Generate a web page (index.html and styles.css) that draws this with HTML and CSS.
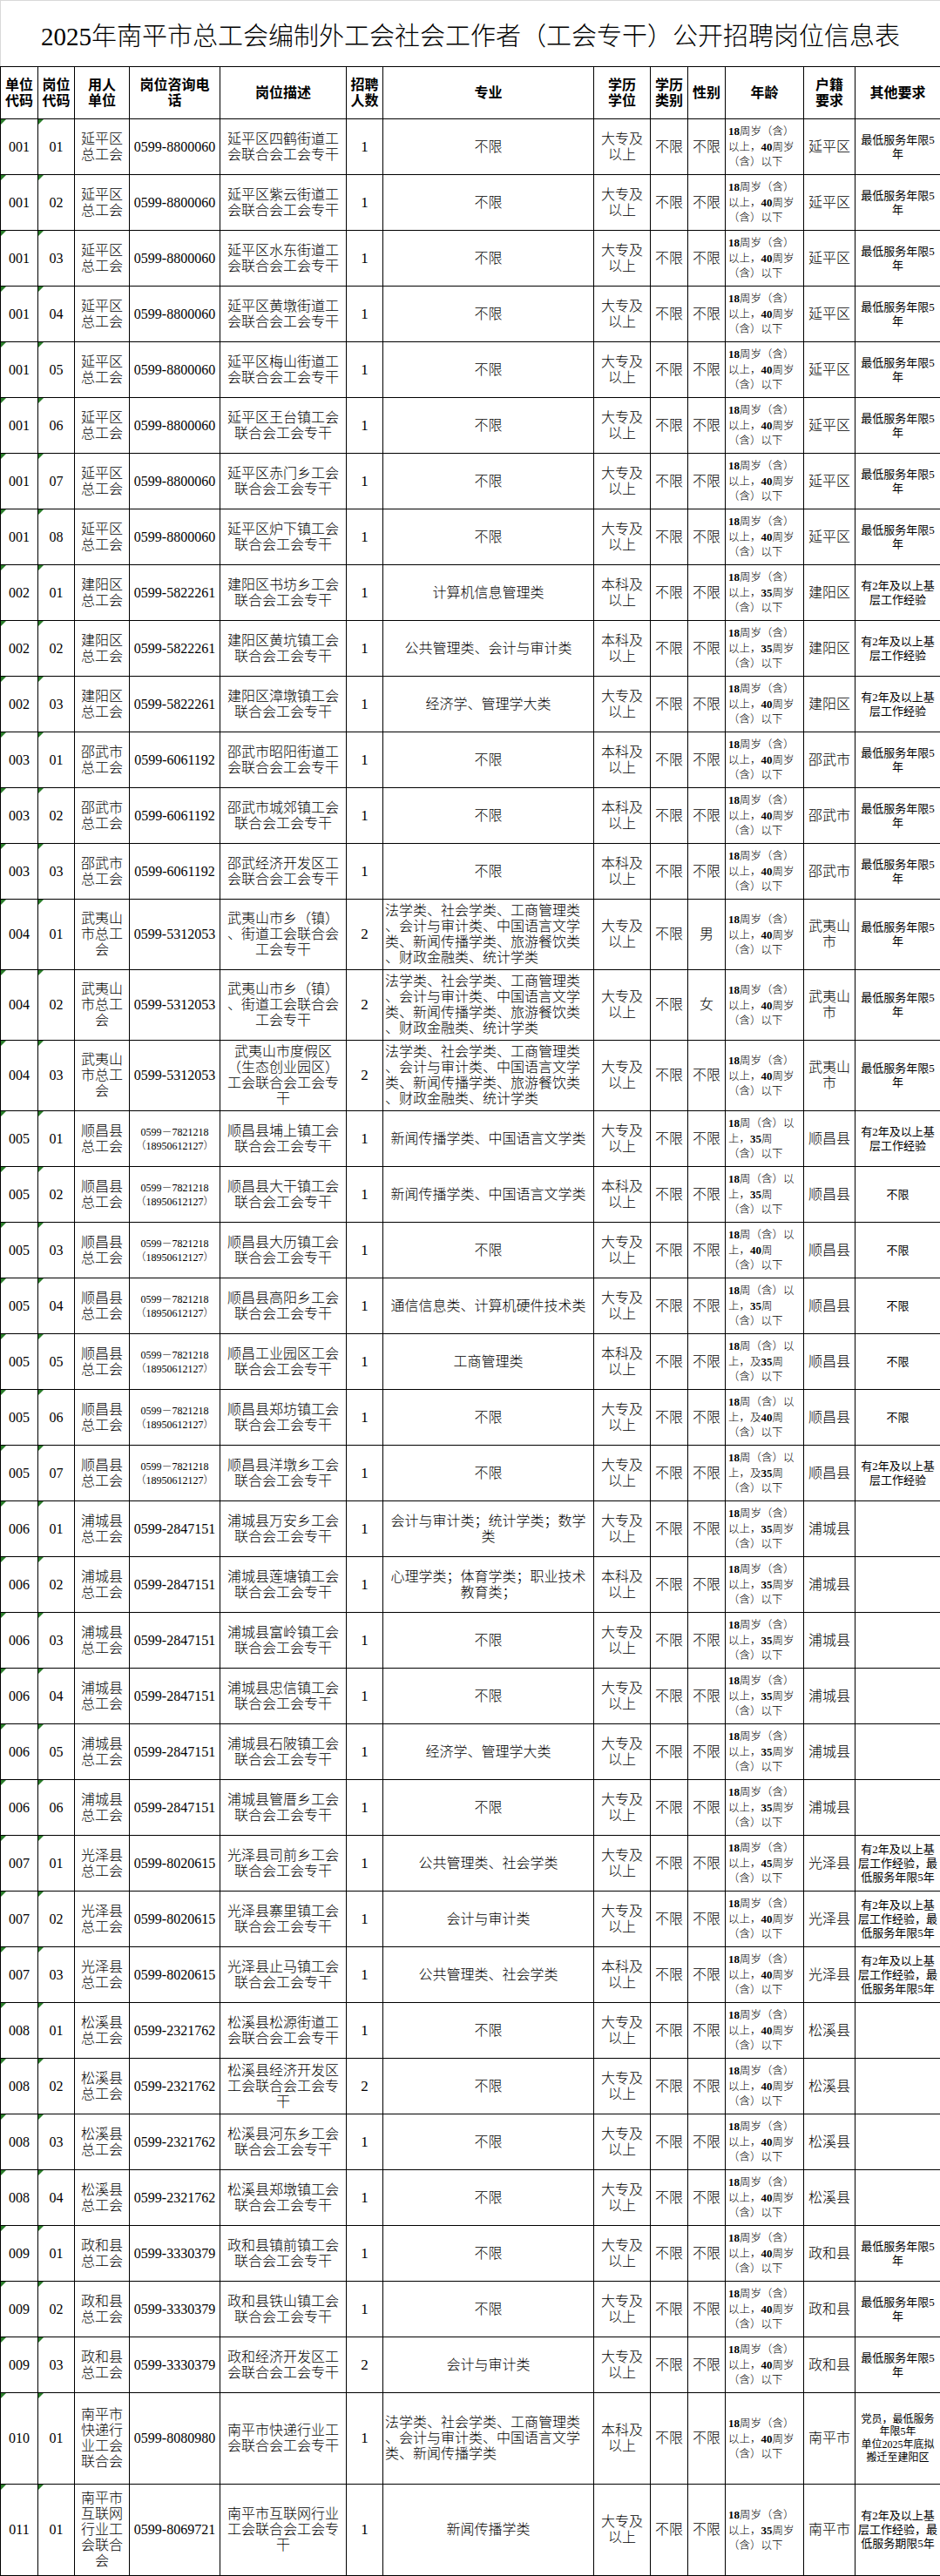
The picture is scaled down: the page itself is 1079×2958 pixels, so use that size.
FILE: index.html
```html
<!DOCTYPE html>
<html lang="zh-CN">
<head>
<meta charset="utf-8">
<title>2025年南平市总工会编制外工会社会工作者（工会专干）公开招聘岗位信息表</title>
<link rel="stylesheet" href="styles.css">
</head>
<body>
<table class="sheet">
<colgroup>
<col class="w43"><col class="w42"><col class="w63"><col class="w104"><col class="w145"><col class="w42"><col class="w242"><col class="w65"><col class="w43"><col class="w43"><col class="w90"><col class="w59"><col class="w98">
</colgroup>
<tr class="title"><td colspan="13">2025年南平市总工会编制外工会社会工作者（工会专干）公开招聘岗位信息表</td></tr>
<tr class="head"><th>单位<br>代码</th><th>岗位<br>代码</th><th>用人<br>单位</th><th>岗位咨询电<br>话</th><th>岗位描述</th><th>招聘<br>人数</th><th>专业</th><th>学历<br>学位</th><th>学历<br>类别</th><th>性别</th><th>年龄</th><th>户籍<br>要求</th><th>其他要求</th></tr>

<tr><td class="code">001</td><td class="code">01</td><td>延平区<br>总工会</td><td class="ph">0599-8800060</td><td>延平区四鹤街道工<br>会联合会工会专干</td><td class="num">1</td><td>不限</td><td>大专及<br>以上</td><td>不限</td><td>不限</td><td class="age"><b>18</b>周岁（含）<br>以上，<b>40</b>周岁<br>（含）以下</td><td>延平区</td><td class="oth">最低服务年限5<br>年</td></tr>
<tr><td class="code">001</td><td class="code">02</td><td>延平区<br>总工会</td><td class="ph">0599-8800060</td><td>延平区紫云街道工<br>会联合会工会专干</td><td class="num">1</td><td>不限</td><td>大专及<br>以上</td><td>不限</td><td>不限</td><td class="age"><b>18</b>周岁（含）<br>以上，<b>40</b>周岁<br>（含）以下</td><td>延平区</td><td class="oth">最低服务年限5<br>年</td></tr>
<tr><td class="code">001</td><td class="code">03</td><td>延平区<br>总工会</td><td class="ph">0599-8800060</td><td>延平区水东街道工<br>会联合会工会专干</td><td class="num">1</td><td>不限</td><td>大专及<br>以上</td><td>不限</td><td>不限</td><td class="age"><b>18</b>周岁（含）<br>以上，<b>40</b>周岁<br>（含）以下</td><td>延平区</td><td class="oth">最低服务年限5<br>年</td></tr>
<tr><td class="code">001</td><td class="code">04</td><td>延平区<br>总工会</td><td class="ph">0599-8800060</td><td>延平区黄墩街道工<br>会联合会工会专干</td><td class="num">1</td><td>不限</td><td>大专及<br>以上</td><td>不限</td><td>不限</td><td class="age"><b>18</b>周岁（含）<br>以上，<b>40</b>周岁<br>（含）以下</td><td>延平区</td><td class="oth">最低服务年限5<br>年</td></tr>
<tr><td class="code">001</td><td class="code">05</td><td>延平区<br>总工会</td><td class="ph">0599-8800060</td><td>延平区梅山街道工<br>会联合会工会专干</td><td class="num">1</td><td>不限</td><td>大专及<br>以上</td><td>不限</td><td>不限</td><td class="age"><b>18</b>周岁（含）<br>以上，<b>40</b>周岁<br>（含）以下</td><td>延平区</td><td class="oth">最低服务年限5<br>年</td></tr>
<tr><td class="code">001</td><td class="code">06</td><td>延平区<br>总工会</td><td class="ph">0599-8800060</td><td>延平区王台镇工会<br>联合会工会专干</td><td class="num">1</td><td>不限</td><td>大专及<br>以上</td><td>不限</td><td>不限</td><td class="age"><b>18</b>周岁（含）<br>以上，<b>40</b>周岁<br>（含）以下</td><td>延平区</td><td class="oth">最低服务年限5<br>年</td></tr>
<tr><td class="code">001</td><td class="code">07</td><td>延平区<br>总工会</td><td class="ph">0599-8800060</td><td>延平区赤门乡工会<br>联合会工会专干</td><td class="num">1</td><td>不限</td><td>大专及<br>以上</td><td>不限</td><td>不限</td><td class="age"><b>18</b>周岁（含）<br>以上，<b>40</b>周岁<br>（含）以下</td><td>延平区</td><td class="oth">最低服务年限5<br>年</td></tr>
<tr><td class="code">001</td><td class="code">08</td><td>延平区<br>总工会</td><td class="ph">0599-8800060</td><td>延平区炉下镇工会<br>联合会工会专干</td><td class="num">1</td><td>不限</td><td>大专及<br>以上</td><td>不限</td><td>不限</td><td class="age"><b>18</b>周岁（含）<br>以上，<b>40</b>周岁<br>（含）以下</td><td>延平区</td><td class="oth">最低服务年限5<br>年</td></tr>

<tr><td class="code">002</td><td class="code">01</td><td>建阳区<br>总工会</td><td class="ph">0599-5822261</td><td>建阳区书坊乡工会<br>联合会工会专干</td><td class="num">1</td><td>计算机信息管理类</td><td>本科及<br>以上</td><td>不限</td><td>不限</td><td class="age"><b>18</b>周岁（含）<br>以上，<b>35</b>周岁<br>（含）以下</td><td>建阳区</td><td class="oth">有2年及以上基<br>层工作经验</td></tr>
<tr><td class="code">002</td><td class="code">02</td><td>建阳区<br>总工会</td><td class="ph">0599-5822261</td><td>建阳区黄坑镇工会<br>联合会工会专干</td><td class="num">1</td><td>公共管理类、会计与审计类</td><td>本科及<br>以上</td><td>不限</td><td>不限</td><td class="age"><b>18</b>周岁（含）<br>以上，<b>35</b>周岁<br>（含）以下</td><td>建阳区</td><td class="oth">有2年及以上基<br>层工作经验</td></tr>
<tr><td class="code">002</td><td class="code">03</td><td>建阳区<br>总工会</td><td class="ph">0599-5822261</td><td>建阳区漳墩镇工会<br>联合会工会专干</td><td class="num">1</td><td>经济学、管理学大类</td><td>大专及<br>以上</td><td>不限</td><td>不限</td><td class="age"><b>18</b>周岁（含）<br>以上，<b>40</b>周岁<br>（含）以下</td><td>建阳区</td><td class="oth">有2年及以上基<br>层工作经验</td></tr>

<tr><td class="code">003</td><td class="code">01</td><td>邵武市<br>总工会</td><td class="ph">0599-6061192</td><td>邵武市昭阳街道工<br>会联合会工会专干</td><td class="num">1</td><td>不限</td><td>本科及<br>以上</td><td>不限</td><td>不限</td><td class="age"><b>18</b>周岁（含）<br>以上，<b>40</b>周岁<br>（含）以下</td><td>邵武市</td><td class="oth">最低服务年限5<br>年</td></tr>
<tr><td class="code">003</td><td class="code">02</td><td>邵武市<br>总工会</td><td class="ph">0599-6061192</td><td>邵武市城郊镇工会<br>联合会工会专干</td><td class="num">1</td><td>不限</td><td>本科及<br>以上</td><td>不限</td><td>不限</td><td class="age"><b>18</b>周岁（含）<br>以上，<b>40</b>周岁<br>（含）以下</td><td>邵武市</td><td class="oth">最低服务年限5<br>年</td></tr>
<tr><td class="code">003</td><td class="code">03</td><td>邵武市<br>总工会</td><td class="ph">0599-6061192</td><td>邵武经济开发区工<br>会联合会工会专干</td><td class="num">1</td><td>不限</td><td>本科及<br>以上</td><td>不限</td><td>不限</td><td class="age"><b>18</b>周岁（含）<br>以上，<b>40</b>周岁<br>（含）以下</td><td>邵武市</td><td class="oth">最低服务年限5<br>年</td></tr>

<tr class="r81"><td class="code">004</td><td class="code">01</td><td>武夷山<br>市总工<br>会</td><td class="ph">0599-5312053</td><td>武夷山市乡（镇）<br>、街道工会联合会<br>工会专干</td><td class="num">2</td><td class="lft">法学类、社会学类、工商管理类<br>、会计与审计类、中国语言文学<br>类、新闻传播学类、旅游餐饮类<br>、财政金融类、统计学类</td><td>大专及<br>以上</td><td>不限</td><td>男</td><td class="age"><b>18</b>周岁（含）<br>以上，<b>40</b>周岁<br>（含）以下</td><td>武夷山<br>市</td><td class="oth">最低服务年限5<br>年</td></tr>
<tr class="r81"><td class="code">004</td><td class="code">02</td><td>武夷山<br>市总工<br>会</td><td class="ph">0599-5312053</td><td>武夷山市乡（镇）<br>、街道工会联合会<br>工会专干</td><td class="num">2</td><td class="lft">法学类、社会学类、工商管理类<br>、会计与审计类、中国语言文学<br>类、新闻传播学类、旅游餐饮类<br>、财政金融类、统计学类</td><td>大专及<br>以上</td><td>不限</td><td>女</td><td class="age"><b>18</b>周岁（含）<br>以上，<b>40</b>周岁<br>（含）以下</td><td>武夷山<br>市</td><td class="oth">最低服务年限5<br>年</td></tr>
<tr class="r81"><td class="code">004</td><td class="code">03</td><td>武夷山<br>市总工<br>会</td><td class="ph">0599-5312053</td><td>武夷山市度假区<br>（生态创业园区）<br>工会联合会工会专<br>干</td><td class="num">2</td><td class="lft">法学类、社会学类、工商管理类<br>、会计与审计类、中国语言文学<br>类、新闻传播学类、旅游餐饮类<br>、财政金融类、统计学类</td><td>大专及<br>以上</td><td>不限</td><td>不限</td><td class="age"><b>18</b>周岁（含）<br>以上，<b>40</b>周岁<br>（含）以下</td><td>武夷山<br>市</td><td class="oth">最低服务年限5<br>年</td></tr>

<tr><td class="code">005</td><td class="code">01</td><td>顺昌县<br>总工会</td><td class="ph2">0599－7821218<br>（18950612127）</td><td>顺昌县埔上镇工会<br>联合会工会专干</td><td class="num">1</td><td>新闻传播学类、中国语言文学类</td><td>大专及<br>以上</td><td>不限</td><td>不限</td><td class="age"><b>18</b>周（含）以<br>上，<b>35</b>周<br>（含）以下</td><td>顺昌县</td><td class="oth">有2年及以上基<br>层工作经验</td></tr>
<tr><td class="code">005</td><td class="code">02</td><td>顺昌县<br>总工会</td><td class="ph2">0599－7821218<br>（18950612127）</td><td>顺昌县大干镇工会<br>联合会工会专干</td><td class="num">1</td><td>新闻传播学类、中国语言文学类</td><td>本科及<br>以上</td><td>不限</td><td>不限</td><td class="age"><b>18</b>周（含）以<br>上，<b>35</b>周<br>（含）以下</td><td>顺昌县</td><td class="oth">不限</td></tr>
<tr><td class="code">005</td><td class="code">03</td><td>顺昌县<br>总工会</td><td class="ph2">0599－7821218<br>（18950612127）</td><td>顺昌县大历镇工会<br>联合会工会专干</td><td class="num">1</td><td>不限</td><td>大专及<br>以上</td><td>不限</td><td>不限</td><td class="age"><b>18</b>周（含）以<br>上，<b>40</b>周<br>（含）以下</td><td>顺昌县</td><td class="oth">不限</td></tr>
<tr><td class="code">005</td><td class="code">04</td><td>顺昌县<br>总工会</td><td class="ph2">0599－7821218<br>（18950612127）</td><td>顺昌县高阳乡工会<br>联合会工会专干</td><td class="num">1</td><td>通信信息类、计算机硬件技术类</td><td>大专及<br>以上</td><td>不限</td><td>不限</td><td class="age"><b>18</b>周（含）以<br>上，<b>35</b>周<br>（含）以下</td><td>顺昌县</td><td class="oth">不限</td></tr>
<tr><td class="code">005</td><td class="code">05</td><td>顺昌县<br>总工会</td><td class="ph2">0599－7821218<br>（18950612127）</td><td>顺昌工业园区工会<br>联合会工会专干</td><td class="num">1</td><td>工商管理类</td><td>本科及<br>以上</td><td>不限</td><td>不限</td><td class="age"><b>18</b>周（含）以<br>上，及<b>35</b>周<br>（含）以下</td><td>顺昌县</td><td class="oth">不限</td></tr>
<tr><td class="code">005</td><td class="code">06</td><td>顺昌县<br>总工会</td><td class="ph2">0599－7821218<br>（18950612127）</td><td>顺昌县郑坊镇工会<br>联合会工会专干</td><td class="num">1</td><td>不限</td><td>大专及<br>以上</td><td>不限</td><td>不限</td><td class="age"><b>18</b>周（含）以<br>上，及<b>40</b>周<br>（含）以下</td><td>顺昌县</td><td class="oth">不限</td></tr>
<tr><td class="code">005</td><td class="code">07</td><td>顺昌县<br>总工会</td><td class="ph2">0599－7821218<br>（18950612127）</td><td>顺昌县洋墩乡工会<br>联合会工会专干</td><td class="num">1</td><td>不限</td><td>大专及<br>以上</td><td>不限</td><td>不限</td><td class="age"><b>18</b>周（含）以<br>上，及<b>35</b>周<br>（含）以下</td><td>顺昌县</td><td class="oth">有2年及以上基<br>层工作经验</td></tr>

<tr><td class="code">006</td><td class="code">01</td><td>浦城县<br>总工会</td><td class="ph">0599-2847151</td><td>浦城县万安乡工会<br>联合会工会专干</td><td class="num">1</td><td>会计与审计类；统计学类；数学<br>类</td><td>大专及<br>以上</td><td>不限</td><td>不限</td><td class="age"><b>18</b>周岁（含）<br>以上，<b>35</b>周岁<br>（含）以下</td><td>浦城县</td><td class="oth"></td></tr>
<tr><td class="code">006</td><td class="code">02</td><td>浦城县<br>总工会</td><td class="ph">0599-2847151</td><td>浦城县莲塘镇工会<br>联合会工会专干</td><td class="num">1</td><td>心理学类；体育学类；职业技术<br>教育类；</td><td>本科及<br>以上</td><td>不限</td><td>不限</td><td class="age"><b>18</b>周岁（含）<br>以上，<b>35</b>周岁<br>（含）以下</td><td>浦城县</td><td class="oth"></td></tr>
<tr><td class="code">006</td><td class="code">03</td><td>浦城县<br>总工会</td><td class="ph">0599-2847151</td><td>浦城县富岭镇工会<br>联合会工会专干</td><td class="num">1</td><td>不限</td><td>大专及<br>以上</td><td>不限</td><td>不限</td><td class="age"><b>18</b>周岁（含）<br>以上，<b>35</b>周岁<br>（含）以下</td><td>浦城县</td><td class="oth"></td></tr>
<tr><td class="code">006</td><td class="code">04</td><td>浦城县<br>总工会</td><td class="ph">0599-2847151</td><td>浦城县忠信镇工会<br>联合会工会专干</td><td class="num">1</td><td>不限</td><td>大专及<br>以上</td><td>不限</td><td>不限</td><td class="age"><b>18</b>周岁（含）<br>以上，<b>35</b>周岁<br>（含）以下</td><td>浦城县</td><td class="oth"></td></tr>
<tr><td class="code">006</td><td class="code">05</td><td>浦城县<br>总工会</td><td class="ph">0599-2847151</td><td>浦城县石陂镇工会<br>联合会工会专干</td><td class="num">1</td><td>经济学、管理学大类</td><td>大专及<br>以上</td><td>不限</td><td>不限</td><td class="age"><b>18</b>周岁（含）<br>以上，<b>35</b>周岁<br>（含）以下</td><td>浦城县</td><td class="oth"></td></tr>
<tr><td class="code">006</td><td class="code">06</td><td>浦城县<br>总工会</td><td class="ph">0599-2847151</td><td>浦城县管厝乡工会<br>联合会工会专干</td><td class="num">1</td><td>不限</td><td>大专及<br>以上</td><td>不限</td><td>不限</td><td class="age"><b>18</b>周岁（含）<br>以上，<b>35</b>周岁<br>（含）以下</td><td>浦城县</td><td class="oth"></td></tr>

<tr><td class="code">007</td><td class="code">01</td><td>光泽县<br>总工会</td><td class="ph">0599-8020615</td><td>光泽县司前乡工会<br>联合会工会专干</td><td class="num">1</td><td>公共管理类、社会学类</td><td>大专及<br>以上</td><td>不限</td><td>不限</td><td class="age"><b>18</b>周岁（含）<br>以上，<b>45</b>周岁<br>（含）以下</td><td>光泽县</td><td class="oth">有2年及以上基<br>层工作经验，最<br>低服务年限5年</td></tr>
<tr><td class="code">007</td><td class="code">02</td><td>光泽县<br>总工会</td><td class="ph">0599-8020615</td><td>光泽县寨里镇工会<br>联合会工会专干</td><td class="num">1</td><td>会计与审计类</td><td>大专及<br>以上</td><td>不限</td><td>不限</td><td class="age"><b>18</b>周岁（含）<br>以上，<b>40</b>周岁<br>（含）以下</td><td>光泽县</td><td class="oth">有2年及以上基<br>层工作经验，最<br>低服务年限5年</td></tr>
<tr><td class="code">007</td><td class="code">03</td><td>光泽县<br>总工会</td><td class="ph">0599-8020615</td><td>光泽县止马镇工会<br>联合会工会专干</td><td class="num">1</td><td>公共管理类、社会学类</td><td>本科及<br>以上</td><td>不限</td><td>不限</td><td class="age"><b>18</b>周岁（含）<br>以上，<b>40</b>周岁<br>（含）以下</td><td>光泽县</td><td class="oth">有2年及以上基<br>层工作经验，最<br>低服务年限5年</td></tr>

<tr><td class="code">008</td><td class="code">01</td><td>松溪县<br>总工会</td><td class="ph">0599-2321762</td><td>松溪县松源街道工<br>会联合会工会专干</td><td class="num">1</td><td>不限</td><td>大专及<br>以上</td><td>不限</td><td>不限</td><td class="age"><b>18</b>周岁（含）<br>以上，<b>40</b>周岁<br>（含）以下</td><td>松溪县</td><td class="oth"></td></tr>
<tr><td class="code">008</td><td class="code">02</td><td>松溪县<br>总工会</td><td class="ph">0599-2321762</td><td>松溪县经济开发区<br>工会联合会工会专<br>干</td><td class="num">2</td><td>不限</td><td>大专及<br>以上</td><td>不限</td><td>不限</td><td class="age"><b>18</b>周岁（含）<br>以上，<b>40</b>周岁<br>（含）以下</td><td>松溪县</td><td class="oth"></td></tr>
<tr><td class="code">008</td><td class="code">03</td><td>松溪县<br>总工会</td><td class="ph">0599-2321762</td><td>松溪县河东乡工会<br>联合会工会专干</td><td class="num">1</td><td>不限</td><td>大专及<br>以上</td><td>不限</td><td>不限</td><td class="age"><b>18</b>周岁（含）<br>以上，<b>40</b>周岁<br>（含）以下</td><td>松溪县</td><td class="oth"></td></tr>
<tr><td class="code">008</td><td class="code">04</td><td>松溪县<br>总工会</td><td class="ph">0599-2321762</td><td>松溪县郑墩镇工会<br>联合会工会专干</td><td class="num">1</td><td>不限</td><td>大专及<br>以上</td><td>不限</td><td>不限</td><td class="age"><b>18</b>周岁（含）<br>以上，<b>40</b>周岁<br>（含）以下</td><td>松溪县</td><td class="oth"></td></tr>

<tr><td class="code">009</td><td class="code">01</td><td>政和县<br>总工会</td><td class="ph">0599-3330379</td><td>政和县镇前镇工会<br>联合会工会专干</td><td class="num">1</td><td>不限</td><td>大专及<br>以上</td><td>不限</td><td>不限</td><td class="age"><b>18</b>周岁（含）<br>以上，<b>40</b>周岁<br>（含）以下</td><td>政和县</td><td class="oth">最低服务年限5<br>年</td></tr>
<tr><td class="code">009</td><td class="code">02</td><td>政和县<br>总工会</td><td class="ph">0599-3330379</td><td>政和县铁山镇工会<br>联合会工会专干</td><td class="num">1</td><td>不限</td><td>大专及<br>以上</td><td>不限</td><td>不限</td><td class="age"><b>18</b>周岁（含）<br>以上，<b>40</b>周岁<br>（含）以下</td><td>政和县</td><td class="oth">最低服务年限5<br>年</td></tr>
<tr><td class="code">009</td><td class="code">03</td><td>政和县<br>总工会</td><td class="ph">0599-3330379</td><td>政和经济开发区工<br>会联合会工会专干</td><td class="num">2</td><td>会计与审计类</td><td>大专及<br>以上</td><td>不限</td><td>不限</td><td class="age"><b>18</b>周岁（含）<br>以上，<b>40</b>周岁<br>（含）以下</td><td>政和县</td><td class="oth">最低服务年限5<br>年</td></tr>

<tr class="r105"><td class="code">010</td><td class="code">01</td><td>南平市<br>快递行<br>业工会<br>联合会</td><td class="ph">0599-8080980</td><td>南平市快递行业工<br>会联合会工会专干</td><td class="num">1</td><td class="lft">法学类、社会学类、工商管理类<br>、会计与审计类、中国语言文学<br>类、新闻传播学类</td><td>本科及<br>以上</td><td>不限</td><td>不限</td><td class="age"><b>18</b>周岁（含）<br>以上，<b>40</b>周岁<br>（含）以下</td><td>南平市</td><td class="oth sm">党员，最低服务<br>年限5年<br>单位2025年底拟<br>搬迁至建阳区</td></tr>
<tr class="r105"><td class="code">011</td><td class="code">01</td><td>南平市<br>互联网<br>行业工<br>会联合<br>会</td><td class="ph">0599-8069721</td><td>南平市互联网行业<br>工会联合会工会专<br>干</td><td class="num">1</td><td>新闻传播学类</td><td>大专及<br>以上</td><td>不限</td><td>不限</td><td class="age"><b>18</b>周岁（含）<br>以上，<b>35</b>周岁<br>（含）以下</td><td>南平市</td><td class="oth">有2年及以上基<br>层工作经验，最<br>低服务期限5年</td></tr>
</table>
</body>
</html>
```

FILE: styles.css
```css
* { box-sizing: border-box; }

html, body {
  margin: 0;
  padding: 0;
  background: #ffffff;
}

body {
  font-family: "Liberation Serif", "Noto Sans CJK SC", serif;
  color: #000;
}

.sheet {
  width: 1079px;
  border-collapse: collapse;
  table-layout: fixed;
}

.w43 { width: 43px; }
.w42 { width: 42px; }
.w63 { width: 63px; }
.w104 { width: 104px; }
.w145 { width: 145px; }
.w242 { width: 242px; }
.w65 { width: 65px; }
.w90 { width: 90px; }
.w59 { width: 59px; }
.w98 { width: 98px; }

.sheet tr { height: 64px; }
.sheet tr.r81 { height: 81px; }
.sheet tr.r105 { height: 105px; }

.sheet td,
.sheet th {
  border: 1px solid #000;
  text-align: center;
  vertical-align: middle;
  font-size: 16px;
  line-height: 18px;
  font-weight: 300;
  padding: 0 1px;
  white-space: nowrap;
  overflow: hidden;
}

.sheet tr.title { height: 76px; }
.sheet tr.title td {
  border: 1px solid #d9d9d9;
  border-bottom: 1px solid #000;
  font-size: 29px;
  line-height: 34px;
  font-weight: 300;
  padding-top: 6px;
}

.sheet tr.head { height: 60px; }
.sheet tr.head th {
  font-weight: 700;
  font-size: 16px;
  line-height: 18px;
}

.sheet td.code {
  position: relative;
}
.sheet td.code::before {
  content: "";
  position: absolute;
  left: 0;
  top: 0;
  border-top: 6px solid #2a7d2a;
  border-right: 6px solid transparent;
}

.sheet td.ph {
  padding: 0;
}

.sheet td.ph2 {
  padding: 0;
  font-size: 12px;
  line-height: 16px;
}

.sheet td.num {
  font-size: 17px;
}

.sheet td.lft {
  text-align: left;
  padding-left: 2px;
}

.sheet td.age {
  text-align: left;
  padding-left: 3px;
  font-size: 12.5px;
  line-height: 17px;
}
.sheet td.age b {
  font-weight: 700;
  font-size: 13px;
}

.sheet td.oth {
  font-size: 13px;
  line-height: 16px;
  font-weight: 400;
}
.sheet td.oth.sm {
  font-size: 12px;
  line-height: 14.7px;
}
```
